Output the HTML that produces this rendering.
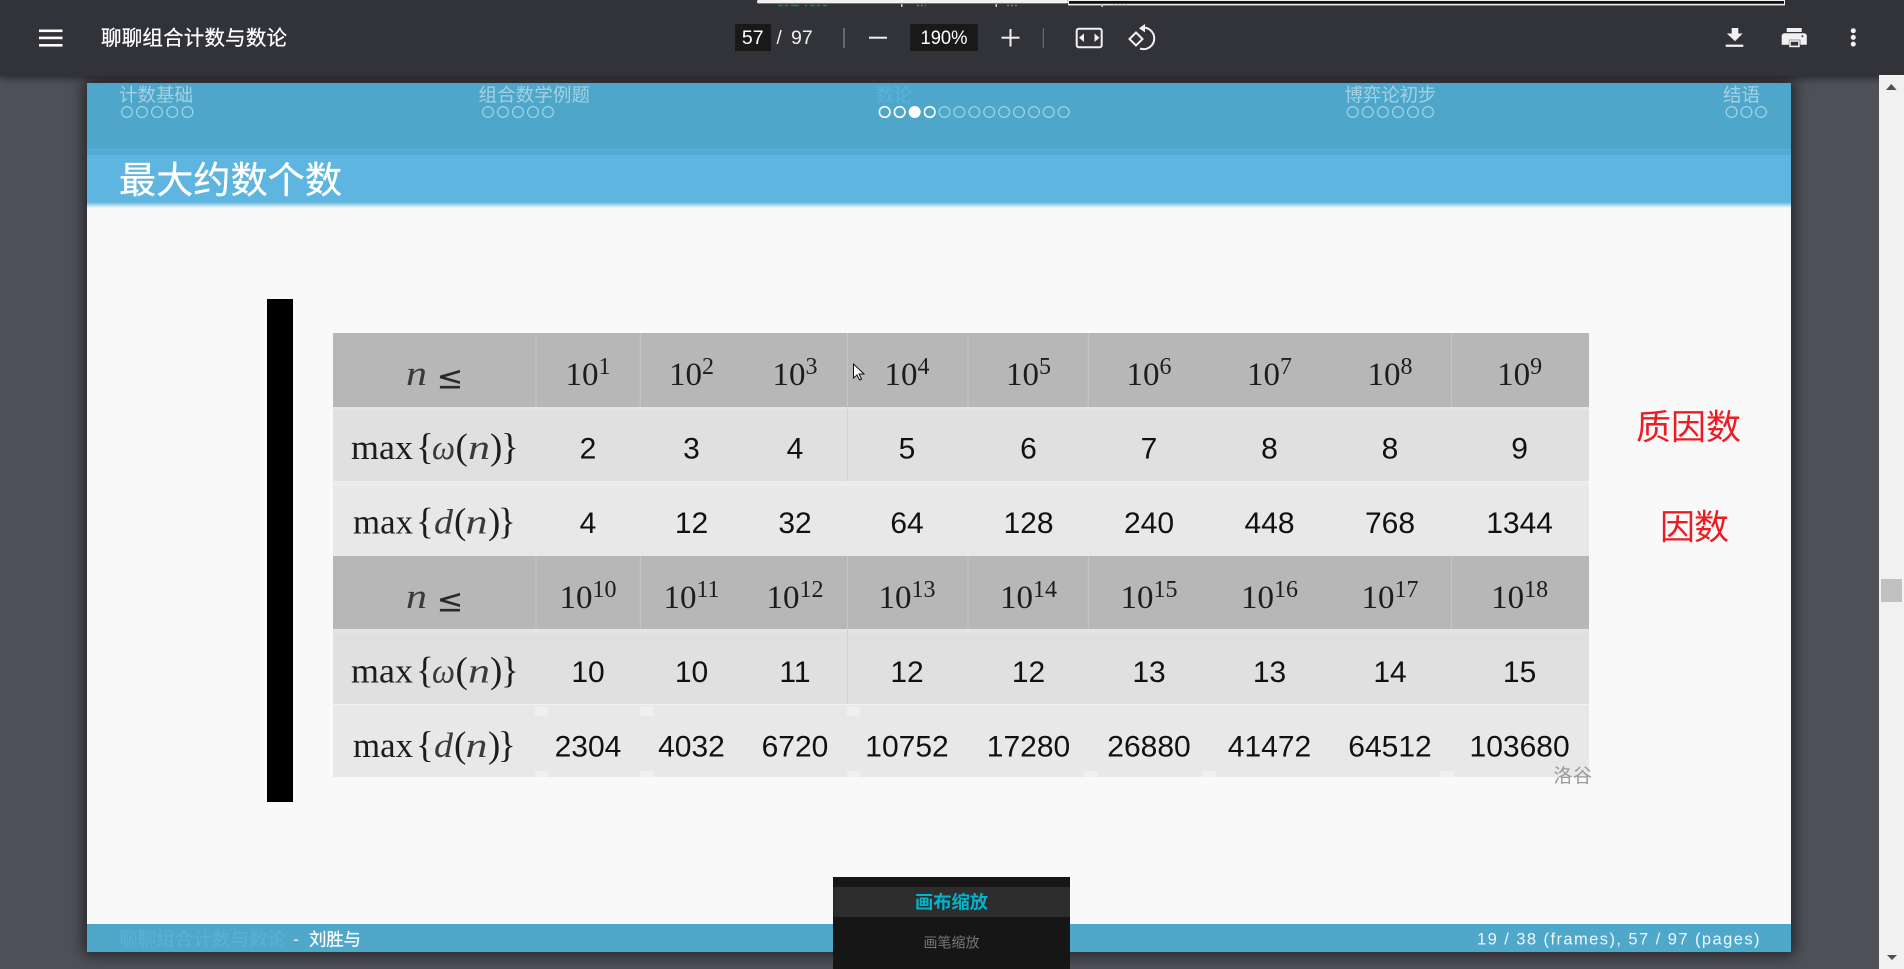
<!DOCTYPE html>
<html lang="zh"><head><meta charset="utf-8"><title>聊聊组合计数与数论</title>
<style>
html,body{margin:0;padding:0;width:1904px;height:969px;overflow:hidden;background:#50505a}
#tb{position:absolute;left:0;top:0;width:1904px;height:76px;background:#323339;box-shadow:0 2px 8px rgba(0,0,0,.55)}
#pg{position:absolute;left:87px;top:83px;width:1704px;height:869px;background:#f9f9f9;box-shadow:0 0 14px 3px rgba(0,0,0,.6)}
#sb{position:absolute;left:1879px;top:75px;width:25px;height:894px;background:#f1f1f1}
svg{position:absolute;left:0;top:0}
.c{font-family:"Liberation Sans","Noto Sans CJK SC",sans-serif}
.d{font-family:"Liberation Sans",sans-serif;font-size:30px;fill:#111;text-anchor:middle}
.r{font-family:"Liberation Serif",serif;font-size:33px;fill:#1c1c1c;text-anchor:middle}
.m{font-family:"Liberation Serif",serif;font-size:35px;fill:#1c1c1c}
.i{font-style:italic;fill:#3a3a3a}
.le{font-family:"DejaVu Sans",sans-serif;font-size:32px;fill:#2a2a2a}
.s{font-size:24px}
.nv{font-size:18.5px;fill:rgba(255,255,255,.48)}
.o{fill:none;stroke:rgba(255,255,255,.48);stroke-width:1.2}
.oa{fill:none;stroke:#fff;stroke-width:1.6}
</style></head><body>
<div id="pg"></div><div id="tb"></div><div id="sb"></div>
<svg width="1904" height="969" viewBox="0 0 1904 969" xmlns="http://www.w3.org/2000/svg">
<defs><linearGradient id="f" x1="0" y1="0" x2="0" y2="1"><stop offset="0" stop-color="#5db5e0"/><stop offset="1" stop-color="#f9f9f9"/></linearGradient></defs>

<!-- top strip artefacts -->
<rect x="757" y="0" width="311" height="3.4" rx="1.5" fill="#f2f2f2"/>
<rect x="1068" y="0" width="717" height="5.4" fill="#f0f0f0"/>
<rect x="1069" y="1" width="715" height="2.8" fill="#111"/>
<path d="M778 5.5H827" stroke="#159a2a" stroke-width="1.6" stroke-dasharray="5 2 3 3 8 6 2 3" opacity=".8"/>
<rect x="901" y="4" width="1.5" height="3" fill="#ccc"/><path d="M917 5.5H926" stroke="#777" stroke-width="1.4" stroke-dasharray="2 2"/>
<rect x="995.5" y="4" width="1.5" height="3" fill="#ccc"/><path d="M1007 5.5H1018" stroke="#777" stroke-width="1.4" stroke-dasharray="2 2"/>
<rect x="1101.5" y="4" width="1.5" height="3" fill="#ccc"/><path d="M1113 5.5H1127" stroke="#777" stroke-width="1.4" stroke-dasharray="2 2"/>

<!-- toolbar left -->
<g fill="#fff"><rect x="39" y="29.5" width="23.5" height="2.6"/><rect x="39" y="36.6" width="23.5" height="2.6"/><rect x="39" y="44" width="23.5" height="2.6"/></g>
<text class="c" x="101" y="45" font-size="20.5" fill="#fff" stroke="#fff" stroke-width=".25" textLength="186">聊聊组合计数与数论</text>

<!-- toolbar centre -->
<rect x="735" y="24" width="36" height="27" fill="#191919"/>
<text class="c" x="752.7" y="44" font-size="19.5" fill="#fff" text-anchor="middle">57</text>
<text class="c" x="776.5" y="43.8" font-size="19" fill="#f0f0f0">/</text>
<text class="c" x="791" y="43.8" font-size="19.5" fill="#f0f0f0">97</text>
<rect x="843.3" y="28" width="1.5" height="20" fill="#7a7a7a"/>
<rect x="869" y="36.7" width="18" height="2" fill="#f1f1f1"/>
<rect x="910" y="24" width="68" height="27" fill="#191919"/>
<text class="c" x="944" y="44" font-size="19" fill="#fff" text-anchor="middle" textLength="47" lengthAdjust="spacingAndGlyphs">190%</text>
<rect x="1001.5" y="36.7" width="18" height="2" fill="#f1f1f1"/><rect x="1009.5" y="29" width="2" height="17.5" fill="#f1f1f1"/>
<rect x="1042.7" y="28" width="1.3" height="20" fill="#666"/>
<rect x="1076.7" y="28.7" width="25" height="18.5" rx="2" fill="none" stroke="#f1f1f1" stroke-width="2"/>
<path d="M1084 33.5V42L1079 37.7ZM1094.5 33.5V42L1099.5 37.7Z" fill="#f1f1f1"/>
<path d="M1136 32.5L1142.5 39L1136 45.5L1129.5 39Z" fill="none" stroke="#f1f1f1" stroke-width="2"/>
<path d="M1141 28A10.7 10.7 0 1 1 1140 48.5" fill="none" stroke="#f1f1f1" stroke-width="2"/>
<path d="M1145 24L1139 28.2L1145 32.4Z" fill="#f1f1f1"/>

<!-- toolbar right -->
<path d="M1731.7 28H1738.3V33.5H1742.7L1735 41.3L1726.9 33.5H1731.7Z" fill="#f1f1f1"/>
<rect x="1725.7" y="44.6" width="17.6" height="2.3" fill="#f1f1f1"/>
<path d="M1786.7 28H1801.7V32H1786.7ZM1784.5 33.2H1804A2.8 2.8 0 0 1 1806.8 36V44.7H1800.3V39.7H1788.9V44.7H1781.7V36A2.8 2.8 0 0 1 1784.5 33.2Z" fill="#f1f1f1"/>
<rect x="1790" y="41" width="9" height="5.4" fill="#323339" stroke="#f1f1f1" stroke-width="1.6"/>
<circle cx="1802.4" cy="36.3" r="1" fill="#323339"/>
<circle cx="1853.3" cy="30.7" r="2.5" fill="#f1f1f1"/><circle cx="1853.3" cy="37.4" r="2.5" fill="#f1f1f1"/><circle cx="1853.3" cy="44.1" r="2.5" fill="#f1f1f1"/>

<!-- scrollbar -->
<path d="M1886 90H1896.7L1891.3 84Z" fill="#505050"/>
<path d="M1887 955H1897L1892 960Z" fill="#505050"/>
<rect x="1881" y="579" width="21" height="23" fill="#c1c1c1"/>

<!-- slide header -->
<rect x="87" y="83" width="1704" height="66" fill="#4ea7ca"/>
<rect x="87" y="149" width="1704" height="1" fill="#5fb2d4"/>
<rect x="87" y="150" width="1704" height="5" fill="#52abd1"/>
<rect x="87" y="155" width="1704" height="47" fill="#5db5e0"/>
<rect x="87" y="202" width="1704" height="6" fill="url(#f)"/>

<g class="c">
<text class="nv" x="119" y="101.5" textLength="74">计数基础</text>
<text class="nv" x="478.5" y="101.5" textLength="111.5">组合数学例题</text>
<text x="876" y="101.5" font-size="18.5" fill="#5bb1dd" textLength="36">数论</text>
<text class="nv" x="1344.5" y="101.5" textLength="92">博弈论初步</text>
<text class="nv" x="1723" y="101.5" textLength="37">结语</text>
</g>
<g class="o">
<circle cx="127" cy="112" r="5.4"/><circle cx="142" cy="112" r="5.4"/><circle cx="157" cy="112" r="5.4"/><circle cx="172.3" cy="112" r="5.4"/><circle cx="187.5" cy="112" r="5.4"/>
<circle cx="488" cy="112" r="5.4"/><circle cx="503" cy="112" r="5.4"/><circle cx="518" cy="112" r="5.4"/><circle cx="533" cy="112" r="5.4"/><circle cx="548" cy="112" r="5.4"/>
<circle cx="944.5" cy="112" r="5.4"/><circle cx="959.4" cy="112" r="5.4"/><circle cx="974.3" cy="112" r="5.4"/><circle cx="989.2" cy="112" r="5.4"/><circle cx="1004.1" cy="112" r="5.4"/><circle cx="1019" cy="112" r="5.4"/><circle cx="1033.9" cy="112" r="5.4"/><circle cx="1048.8" cy="112" r="5.4"/><circle cx="1063.7" cy="112" r="5.4"/>
<circle cx="1352.7" cy="112" r="5.4"/><circle cx="1367.8" cy="112" r="5.4"/><circle cx="1382.9" cy="112" r="5.4"/><circle cx="1398" cy="112" r="5.4"/><circle cx="1413" cy="112" r="5.4"/><circle cx="1428" cy="112" r="5.4"/>
<circle cx="1731.6" cy="112" r="5.4"/><circle cx="1746.4" cy="112" r="5.4"/><circle cx="1761" cy="112" r="5.4"/>
</g>
<circle class="oa" cx="884.7" cy="112" r="5.3"/><circle class="oa" cx="899.7" cy="112" r="5.3"/><circle cx="914.7" cy="112" r="6" fill="#fff"/><circle class="oa" cx="929.7" cy="112" r="5.3"/>

<text class="c" x="119" y="193" font-size="37" fill="#fff" stroke="#fff" stroke-width=".35" textLength="223">最大约数个数</text>

<!-- black bar -->
<rect x="267" y="299" width="26" height="503" fill="#000"/>

<!-- table backgrounds -->
<rect x="333" y="333" width="1256" height="74" fill="#b7b7b7"/>
<rect x="333" y="407" width="1256" height="74" fill="#e0e0e0"/>
<rect x="333" y="407" width="1256" height="3" fill="#e5e5e5"/>
<rect x="333" y="481" width="1256" height="75" fill="#e8e8e8"/>
<rect x="333" y="481" width="1256" height="5" fill="#ededed"/>
<rect x="333" y="556" width="1256" height="73" fill="#b7b7b7"/>
<rect x="333" y="629" width="1256" height="75" fill="#e0e0e0"/>
<rect x="333" y="629" width="1256" height="4" fill="#e4e4e4"/>
<rect x="333" y="704" width="1256" height="73" fill="#e8e8e8"/>
<rect x="333" y="704" width="1256" height="1" fill="#f1f1f1"/>
<g fill="#c6c6c6">
<rect x="535.5" y="333" width="1" height="74"/><rect x="639.7" y="333" width="1" height="74"/><rect x="847" y="333" width="1" height="74"/><rect x="967.5" y="333" width="1" height="74"/><rect x="1087.7" y="333" width="1" height="74"/><rect x="1451" y="333" width="1" height="74"/>
<rect x="535.5" y="556" width="1" height="73"/><rect x="639.7" y="556" width="1" height="73"/><rect x="847" y="556" width="1" height="73"/><rect x="967.5" y="556" width="1" height="73"/><rect x="1087.7" y="556" width="1" height="73"/><rect x="1451" y="556" width="1" height="73"/>
</g>
<rect x="847" y="407" width="1" height="74" fill="#d4d4d4"/><rect x="847" y="629" width="1" height="75" fill="#d4d4d4"/>
<g fill="#f0f0f0">
<rect x="535" y="707" width="13" height="9"/><rect x="640" y="707" width="13" height="9"/><rect x="847" y="707" width="13" height="9"/>
<rect x="1084" y="771" width="14" height="6"/><rect x="1203" y="771" width="13" height="6"/><rect x="1440" y="771" width="14" height="6"/>
<rect x="535" y="771" width="13" height="6"/><rect x="640" y="771" width="13" height="6"/><rect x="847" y="771" width="13" height="6"/>
</g>

<!-- row 1 -->
<text class="m i" x="406" y="385" textLength="21" lengthAdjust="spacingAndGlyphs">n</text><text class="le" x="436.5" y="388.5">≤</text>
<text class="r" x="588" y="385">10<tspan class="s" dy="-11">1</tspan></text>
<text class="r" x="691.5" y="385">10<tspan class="s" dy="-11">2</tspan></text>
<text class="r" x="795" y="385">10<tspan class="s" dy="-11">3</tspan></text>
<text class="r" x="907" y="385">10<tspan class="s" dy="-11">4</tspan></text>
<text class="r" x="1028.5" y="385">10<tspan class="s" dy="-11">5</tspan></text>
<text class="r" x="1149" y="385">10<tspan class="s" dy="-11">6</tspan></text>
<text class="r" x="1269.5" y="385">10<tspan class="s" dy="-11">7</tspan></text>
<text class="r" x="1390" y="385">10<tspan class="s" dy="-11">8</tspan></text>
<text class="r" x="1519.6" y="385">10<tspan class="s" dy="-11">9</tspan></text>
<!-- row 2 -->
<g class="m">
<text x="351" y="459" textLength="62" lengthAdjust="spacingAndGlyphs">max</text><text x="416" y="459" font-size="37">{</text><text x="432" y="459" class="i" textLength="23" lengthAdjust="spacingAndGlyphs">ω</text><text x="455.5" y="459" font-size="37">(</text><text x="468" y="459" class="i" textLength="22" lengthAdjust="spacingAndGlyphs">n</text><text x="490" y="459" font-size="37">)</text><text x="501" y="459" font-size="37">}</text>
</g>
<g><text class="d" x="588" y="458.5">2</text><text class="d" x="691.5" y="458.5">3</text><text class="d" x="795" y="458.5">4</text><text class="d" x="907" y="458.5">5</text><text class="d" x="1028.5" y="458.5">6</text><text class="d" x="1149" y="458.5">7</text><text class="d" x="1269.5" y="458.5">8</text><text class="d" x="1390" y="458.5">8</text><text class="d" x="1519.6" y="458.5">9</text></g>
<!-- row 3 -->
<g class="m">
<text x="353" y="533.5" textLength="60" lengthAdjust="spacingAndGlyphs">max</text><text x="416" y="533.5" font-size="37">{</text><text x="434" y="533.5" class="i" textLength="19" lengthAdjust="spacingAndGlyphs">d</text><text x="454" y="533.5" font-size="37">(</text><text x="465.5" y="533.5" class="i" textLength="22" lengthAdjust="spacingAndGlyphs">n</text><text x="488" y="533.5" font-size="37">)</text><text x="498" y="533.5" font-size="37">}</text>
</g>
<g><text class="d" x="588" y="533">4</text><text class="d" x="691.5" y="533">12</text><text class="d" x="795" y="533">32</text><text class="d" x="907" y="533">64</text><text class="d" x="1028.5" y="533">128</text><text class="d" x="1149" y="533">240</text><text class="d" x="1269.5" y="533">448</text><text class="d" x="1390" y="533">768</text><text class="d" x="1519.6" y="533">1344</text></g>
<!-- row 4 -->
<text class="m i" x="406" y="608" textLength="21" lengthAdjust="spacingAndGlyphs">n</text><text class="le" x="436.5" y="611.5">≤</text>
<text class="r" x="588" y="608">10<tspan class="s" dy="-11">10</tspan></text>
<text class="r" x="691.5" y="608">10<tspan class="s" dy="-11">11</tspan></text>
<text class="r" x="795" y="608">10<tspan class="s" dy="-11">12</tspan></text>
<text class="r" x="907" y="608">10<tspan class="s" dy="-11">13</tspan></text>
<text class="r" x="1028.5" y="608">10<tspan class="s" dy="-11">14</tspan></text>
<text class="r" x="1149" y="608">10<tspan class="s" dy="-11">15</tspan></text>
<text class="r" x="1269.5" y="608">10<tspan class="s" dy="-11">16</tspan></text>
<text class="r" x="1390" y="608">10<tspan class="s" dy="-11">17</tspan></text>
<text class="r" x="1519.6" y="608">10<tspan class="s" dy="-11">18</tspan></text>
<!-- row 5 -->
<g class="m">
<text x="351" y="682.5" textLength="62" lengthAdjust="spacingAndGlyphs">max</text><text x="416" y="682.5" font-size="37">{</text><text x="432" y="682.5" class="i" textLength="23" lengthAdjust="spacingAndGlyphs">ω</text><text x="455.5" y="682.5" font-size="37">(</text><text x="468" y="682.5" class="i" textLength="22" lengthAdjust="spacingAndGlyphs">n</text><text x="490" y="682.5" font-size="37">)</text><text x="501" y="682.5" font-size="37">}</text>
</g>
<g><text class="d" x="588" y="682">10</text><text class="d" x="691.5" y="682">10</text><text class="d" x="795" y="682">11</text><text class="d" x="907" y="682">12</text><text class="d" x="1028.5" y="682">12</text><text class="d" x="1149" y="682">13</text><text class="d" x="1269.5" y="682">13</text><text class="d" x="1390" y="682">14</text><text class="d" x="1519.6" y="682">15</text></g>
<!-- row 6 -->
<g class="m">
<text x="353" y="757" textLength="60" lengthAdjust="spacingAndGlyphs">max</text><text x="416" y="757" font-size="37">{</text><text x="434" y="757" class="i" textLength="19" lengthAdjust="spacingAndGlyphs">d</text><text x="454" y="757" font-size="37">(</text><text x="465.5" y="757" class="i" textLength="22" lengthAdjust="spacingAndGlyphs">n</text><text x="488" y="757" font-size="37">)</text><text x="498" y="757" font-size="37">}</text>
</g>
<g><text class="d" x="588" y="756.5">2304</text><text class="d" x="691.5" y="756.5">4032</text><text class="d" x="795" y="756.5">6720</text><text class="d" x="907" y="756.5">10752</text><text class="d" x="1028.5" y="756.5">17280</text><text class="d" x="1149" y="756.5">26880</text><text class="d" x="1269.5" y="756.5">41472</text><text class="d" x="1390" y="756.5">64512</text><text class="d" x="1519.6" y="756.5">103680</text></g>

<!-- annotations -->
<text class="c" x="1636" y="439.5" font-size="35" fill="#ed1c24" textLength="105">质因数</text>
<text class="c" x="1660" y="539.5" font-size="35" fill="#ed1c24" textLength="69">因数</text>
<text class="c" x="1553.5" y="782" font-size="19" fill="#9a9a9a" textLength="38.5">洛谷</text>

<!-- cursor -->
<path d="M853.5 364V378L857 375L859.6 380L861.6 379L859 374H864Z" fill="#fff" stroke="#111" stroke-width="1"/>

<!-- footer -->
<rect x="87" y="924" width="1704" height="28" fill="#4fa8ca"/>
<text class="c" x="119" y="945.5" font-size="18.5" fill="#5ab0da" textLength="167">聊聊组合计数与数论</text>
<text class="c" x="293" y="945" font-size="18" fill="#d8eef6">-</text>
<text class="c" x="309" y="945.5" font-size="17.5" fill="#fff" stroke="#fff" stroke-width=".2" textLength="52">刘胜与</text>
<text class="c" x="1477" y="944.3" font-size="16.5" fill="#eef7fb" textLength="282.5">19 / 38 (frames), 57 / 97 (pages)</text>

<!-- popup -->
<rect x="833" y="877" width="237" height="92" fill="#161616"/>
<rect x="833.5" y="887" width="236.5" height="30" fill="#2d2d2d"/>
<text class="c" x="915" y="908.5" font-size="18.3" font-weight="700" fill="#00b5cc" textLength="73">画布缩放</text>
<text class="c" x="923.5" y="947.7" font-size="14" fill="#777" textLength="56">画笔缩放</text>
</svg>
</body></html>
